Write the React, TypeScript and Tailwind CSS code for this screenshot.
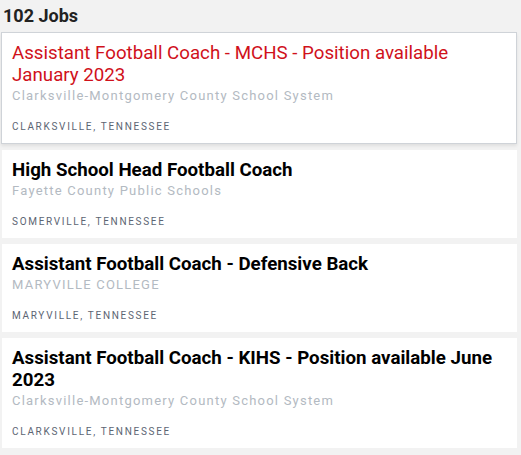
const jobs = [
  {
    title: 'Assistant Football Coach - MCHS - Position available January 2023',
    org: 'Clarksville-Montgomery County School System',
    location: 'Clarksville, Tennessee',
    active: true,
  },
  {
    title: 'High School Head Football Coach',
    org: 'Fayette County Public Schools',
    location: 'Somerville, Tennessee',
  },
  {
    title: 'Assistant Football Coach - Defensive Back',
    org: 'MARYVILLE COLLEGE',
    location: 'Maryville, Tennessee',
  },
  {
    title: 'Assistant Football Coach - KIHS - Position available June 2023',
    org: 'Clarksville-Montgomery County School System',
    location: 'Clarksville, Tennessee',
  },
]

export default function App() {
  return (
    <div className="min-h-[455px] bg-[#f2f2f2] pl-[2px] pr-[4px] pt-[5px] font-['Roboto',sans-serif]">
      <h1 className="pl-px text-[18px] leading-[22px] font-bold text-[#222]">102 Jobs</h1>
      <ul className="mt-[5px] flex flex-col gap-[6px]">
        {jobs.map((job) => (
          <li
            key={job.title}
            className={
              job.active
                ? 'border border-[#cfd3d8] bg-white px-[10px] pt-[9px] pb-[9px] shadow-[0_2px_3px_rgba(0,0,0,0.08)] -ml-px'
                : 'bg-white px-[10px] pt-[9px] pb-[9px]'
            }
          >
            <h2
              className={
                job.active
                  ? 'text-[18.72px] leading-[22px] font-normal text-[#d0111b]'
                  : 'text-[18.72px] leading-[22px] font-bold text-black'
              }
            >
              {job.title}
            </h2>
            <p className="text-[13px] leading-[20px] tracking-[1.22px] text-[#b3bac2]">{job.org}</p>
            <p className="mt-[13px] text-[10px] leading-[15px] uppercase tracking-[1.7px] text-[#5c6573]">
              {job.location}
            </p>
          </li>
        ))}
      </ul>
    </div>
  )
}
